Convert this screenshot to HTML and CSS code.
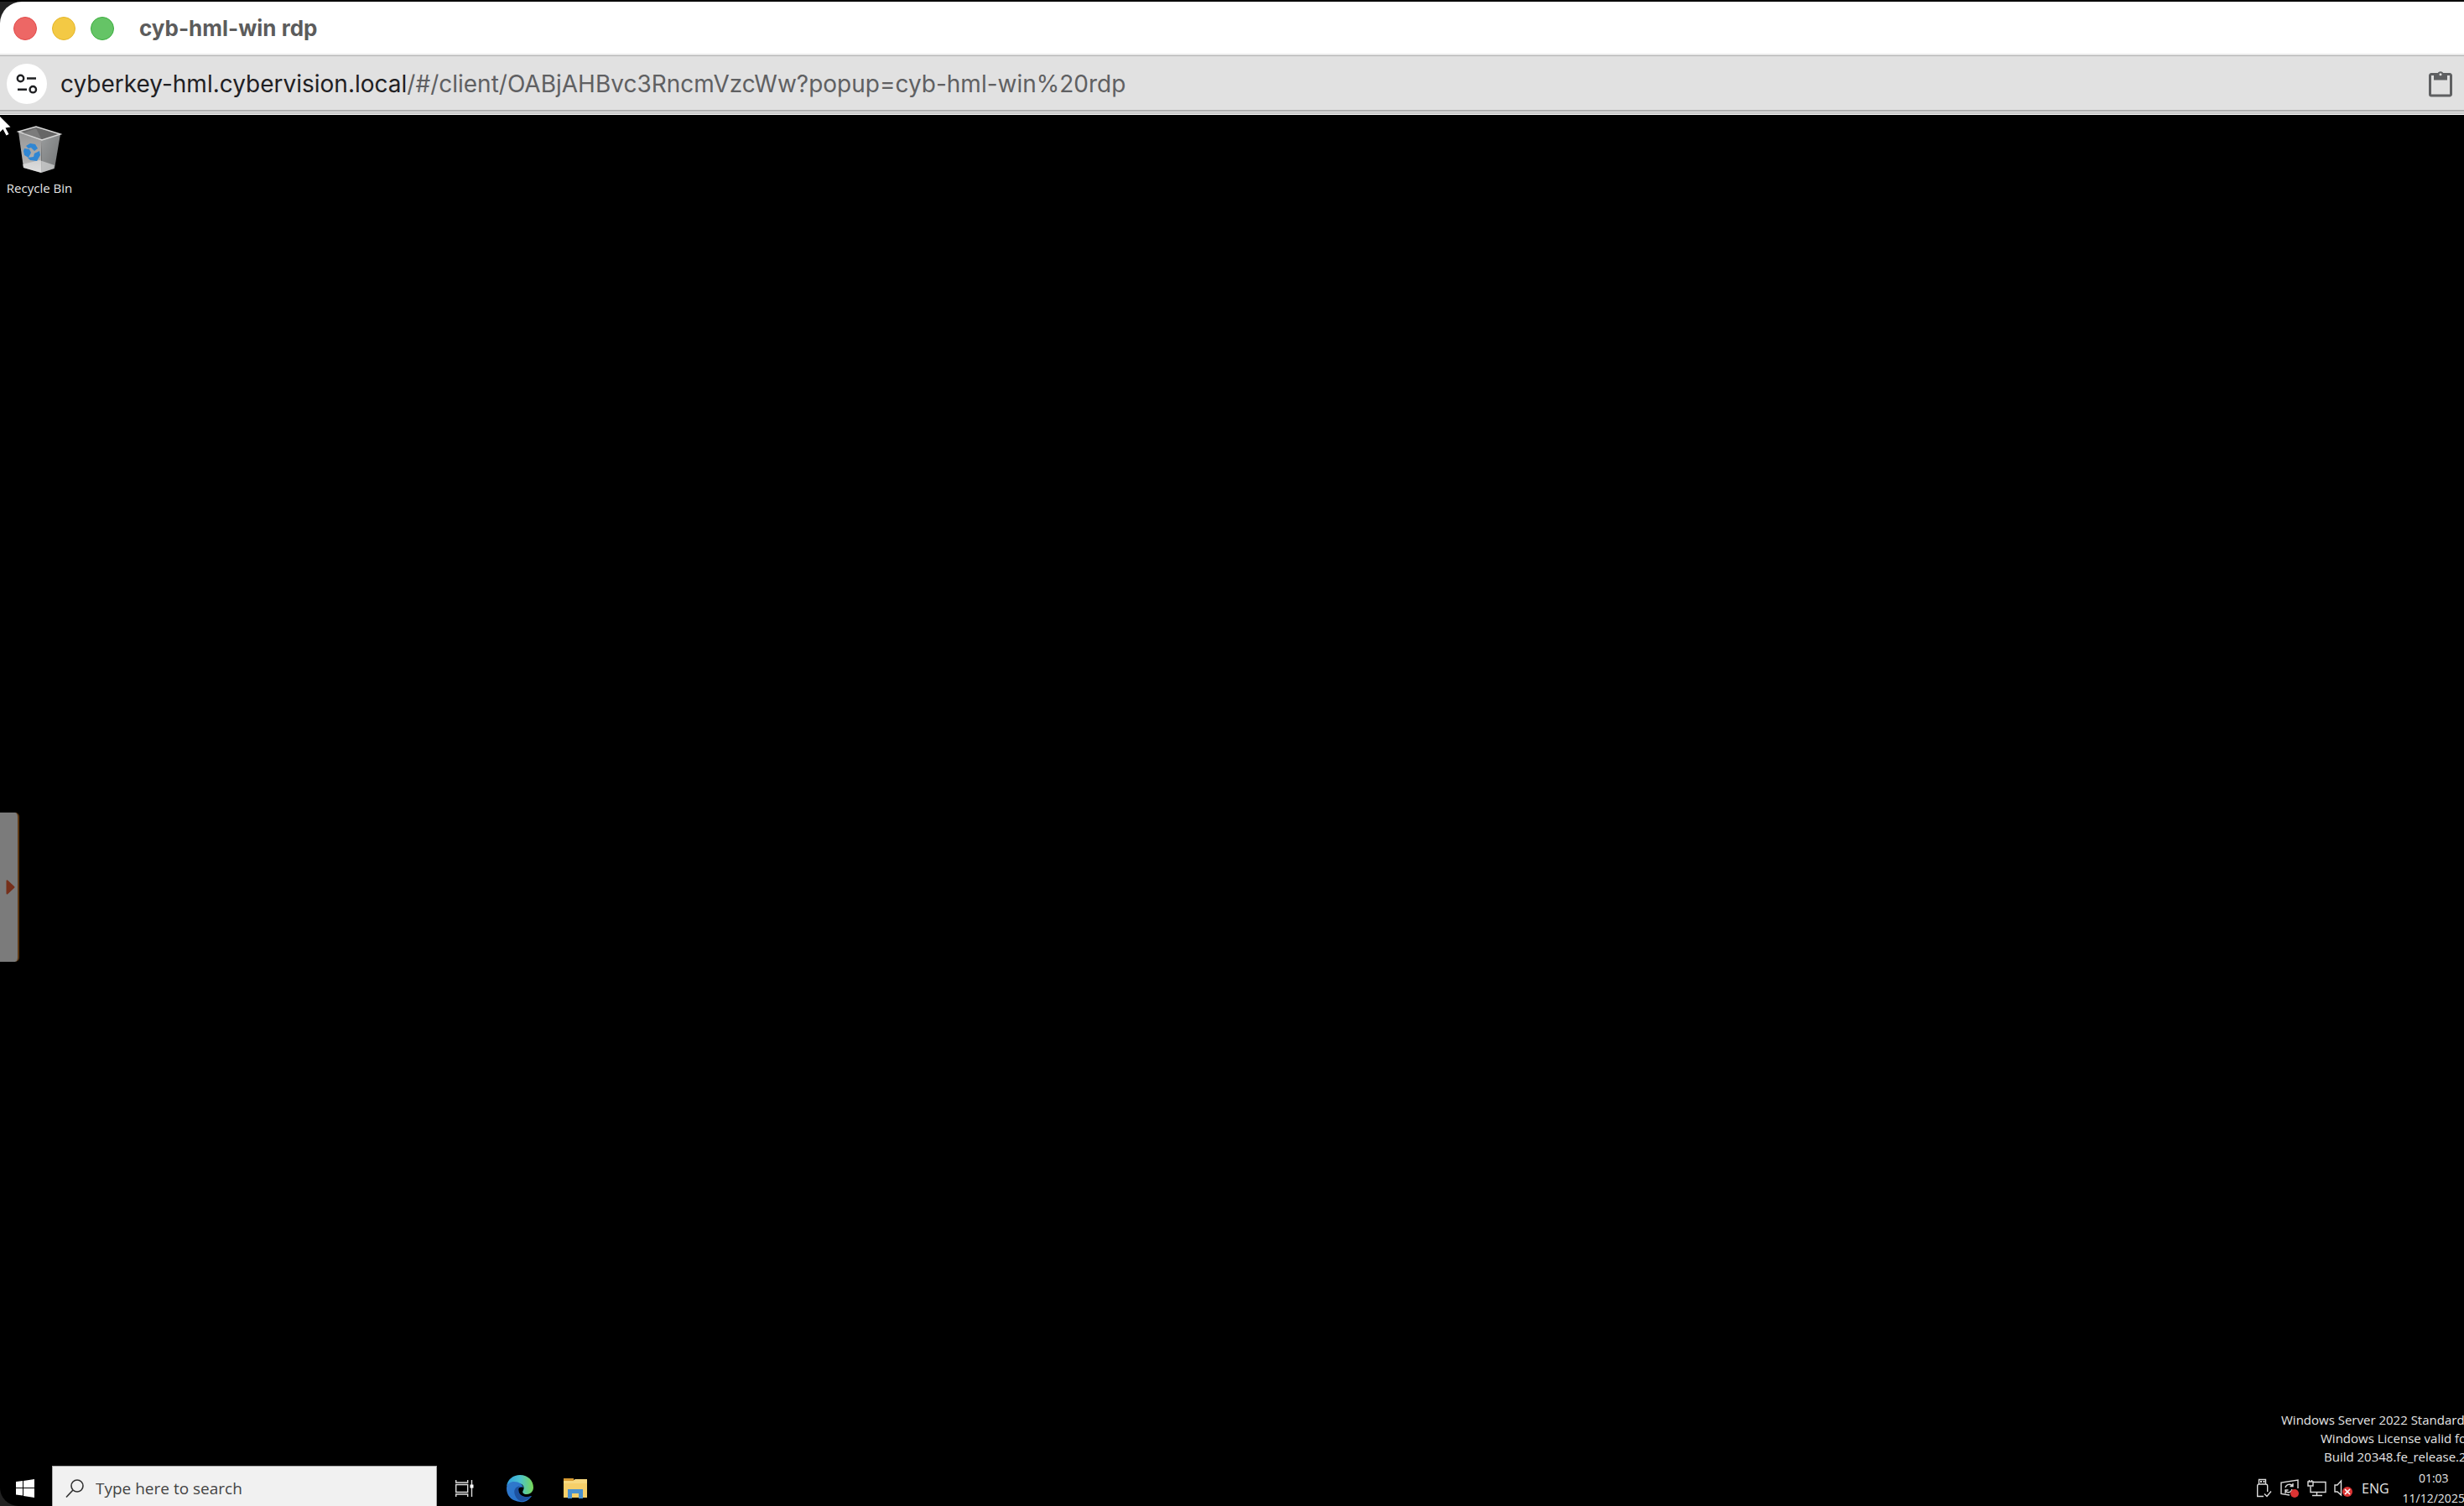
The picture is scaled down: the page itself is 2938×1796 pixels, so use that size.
FILE: index.html
```html
<!DOCTYPE html>
<html lang="en">
<head>
<meta charset="utf-8">
<title>cyb-hml-win rdp</title>
<link rel="stylesheet" href="styles.css">
</head>
<body>
<div class="window">
  <header class="titlebar">
    <div class="lights">
      <button class="light light-close" aria-label="Close"></button>
      <button class="light light-minimise" aria-label="Minimise"></button>
      <button class="light light-zoom" aria-label="Zoom"></button>
    </div>
    <h1 class="title">cyb-hml-win rdp</h1>
  </header>

  <div class="toolbar">
    <button class="site-info" aria-label="View site information">
      <svg width="48" height="48" viewBox="0 0 48 48" fill="none" stroke="#1f2023" stroke-width="2.4">
        <circle cx="16.5" cy="17.500" r="3.700"/><path d="M24 17.500h11M13 30.700h11"/><circle cx="31.300" cy="30.700" r="3.700"/>
      </svg>
    </button>
    <p class="address">cyberkey-hml.cybervision.local<span class="path">/#/client/OABjAHBvc3RncmVzcWw?popup=cyb-hml-win%20rdp</span></p>
    <button class="clipboard" aria-label="Clipboard">
      <svg width="28" height="32" viewBox="0 0 28 32">
        <path d="M3 4.500h22a1.500 1.500 0 0 1 1.500 1.500v22.500a1.500 1.500 0 0 1-1.500 1.500H3a1.500 1.500 0 0 1-1.500-1.500V6A1.500 1.500 0 0 1 3 4.500z" fill="none" stroke="#5f6062" stroke-width="3"/>
        <path d="M6 4h4.500a3.600 3.600 0 0 1 7 0H22v7.500H6z" fill="#5f6062"/><circle cx="14" cy="4.800" r="1.500" fill="#e1e1e1"/>
      </svg>
    </button>
  </div>
  <div class="divider"></div>

  <main class="desktop">
    <svg class="cursor" width="14" height="26" viewBox="0 0 14 26"><path d="M0 2l12.500 12.500-6 1 4 7.500-3 1.500L3.500 17 0 20.500z" fill="#fff"/></svg>

    <div class="workspace">
      <button class="shortcut">
        <svg width="52" height="58" viewBox="0 0 52 58">
          <defs>
            <linearGradient id="binLeft" x2="0" y2="1"><stop stop-color="#969696"/><stop offset=".7" stop-color="#b0b0b0"/><stop offset="1" stop-color="#d0d0d0"/></linearGradient>
            <linearGradient id="binRight" x2="1" y2="1"><stop stop-color="#9a9c9d"/><stop offset="1" stop-color="#707374"/></linearGradient>
          </defs>
          <path d="M1 7L29 17l-1 39L7 50z" fill="url(#binLeft)"/>
          <path d="M29 17l22-7-7 41-16 5z" fill="url(#binRight)"/>
          <path d="M6 46l20-5 18 6-1 4-15 5L7 50z" fill="#ececec" opacity=".55"/>
          <path d="M1 7L22 1l29 9-22 7z" fill="#666" stroke="#d8d8d8" stroke-width="1.500"/>
          <path d="M6 9l16-6 6 12z" fill="#898989" opacity=".6"/>
          <g fill="#2f86d3">
            <path d="M10 24l5-3 6 1 3 5-4 3-4-4-3 1z"/><path d="M8 27l6 1 2 4-3 6-5-3-1-5z"/><path d="M12 38l7-1 1-4 6-3 1 5-4 7-8-1z"/>
          </g>
        </svg>
        <span>Recycle Bin</span>
      </button>

      <button class="drawer-handle" aria-label="Open menu">
        <svg width="12" height="18" viewBox="0 0 12 18"><path d="M1.500 1.500v15l8-7.500z" fill="#76301b" stroke="#76301b" stroke-width="2" stroke-linejoin="round"/></svg>
      </button>

      <div class="watermark">
        <p>Windows Server 2022 Standard</p>
        <p class="license">Windows License valid for</p>
        <p class="build">Build 20348.fe_release.21</p>
      </div>
    </div>

    <footer class="taskbar">
      <button class="start" aria-label="Start">
        <svg width="22" height="22" viewBox="0 0 22 22" fill="#fff"><path d="M0 3l8-1v8H0zM9 2l13-2v10H9zM0 11h8v8.500L0 18.500zM9 11h13v11L9 20z"/></svg>
      </button>
      <label class="search">
        <svg width="22" height="22" viewBox="0 0 22 22" fill="none" stroke="#333" stroke-width="1.600"><circle cx="14" cy="8" r="7"/><path d="M9 13L1 21.500"/></svg>
        <input type="text" placeholder="Type here to search" aria-label="Type here to search">
      </label>
      <button class="app" aria-label="Task view">
        <svg width="24" height="22" viewBox="0 0 24 22" fill="none" stroke="#dedede" stroke-width="1.400"><path d="M1.700 1v3h14V1M1.700 6.500h14v9h-14zM1.700 21v-3h14v3M20.500 1v20"/><path d="M18.500 6.500h4v4h-4z" fill="#fff" stroke="none"/></svg>
      </button>
      <button class="app" aria-label="Microsoft Edge">
        <svg width="32" height="34" viewBox="0 0 32 34">
          <defs>
            <linearGradient id="edgeTop"><stop stop-color="#2d9ee0"/><stop offset=".5" stop-color="#4bc2ce"/><stop offset="1" stop-color="#79d955"/></linearGradient>
            <linearGradient id="edgeBody" x2="1" y2="1"><stop stop-color="#3179ca"/><stop offset="1" stop-color="#2472d0"/></linearGradient>
          </defs>
          <path d="M0 15C1 6 8 1 16 1c10 0 16 7 16 15 0 5-4 8-8 8-4 0-6-2-4-5 2-4-1-8-6-8C8 9 2 11 0 15z" fill="url(#edgeTop)"/>
          <path d="M0 17c0-6 5-8 9-8 6 0 10 3 11 7-6-2-8 3-5 7 3 5 9 5 15 3-4 6-9 8-14 7C6 32 0 26 0 17z" fill="url(#edgeBody)"/>
          <path d="M16 14c-6 1-8 6-6 11 2 5 6 8 10 7 4-1 8-3 10-6-6 2-13 1-15-4-1-3-1-6 1-8z" fill="#1d52a0"/>
        </svg>
      </button>
      <button class="app" aria-label="File Explorer">
        <svg width="30" height="26" viewBox="0 0 30 26">
          <path d="M1 3h28v21H1z" fill="#f6cf69"/><path d="M1 3h12l2-1h14v5H1z" fill="#f8d980"/><path d="M1 1h12v3H1z" fill="#d69a32"/>
          <path d="M6 14h18v11h-5v-6h-8v6H6z" fill="#4a91d0"/>
        </svg>
      </button>
      <div class="tray">
        <svg class="usb" width="18" height="24" viewBox="0 0 18 24" fill="none" stroke="#ddd" stroke-width="1.400"><path d="M3.500 7V1.500h8V7M9 21.500H1.700V9a2 2 0 0 1 2-2h8a2 2 0 0 1 2 2v7M10 18.500l3 3 5-6"/><path d="M5 4h2M8.500 4h2" stroke-width="2"/></svg>
        <svg width="24" height="24" viewBox="0 0 24 24" fill="none" stroke="#ddd" stroke-width="1.400"><path d="M12 20L2 18.500V5l20-3v10"/><path d="M7 11c1-4 6-5 9-2m0-3v3.500h-3.500M15 13c-1 4-5 5-8 2m0 3v-4h3.500"/><circle cx="18" cy="18" r="5" fill="#dc3333" stroke="none"/></svg>
        <svg width="24" height="24" viewBox="0 0 24 24" fill="none" stroke="#ddd" stroke-width="1.400"><path d="M8 4.500h15v12H5V10M7 20.500h12M12.500 17v3.500M2 4h6v5H2zM3.500 2v2M6.500 2v2"/></svg>
        <svg width="24" height="24" viewBox="0 0 24 24" fill="none" stroke="#ddd" stroke-width="1.400"><path d="M9.500 3v17L5 16H2V8h3z"/><circle cx="17" cy="16" r="6" fill="#dc3333" stroke="none"/><path d="M14 13l6 6m0-6l-6 6" stroke="#fff" stroke-width="1.600"/></svg>
        <span class="language">ENG</span>
        <div class="clock"><time>01:03</time><time>11/12/2025</time></div>
      </div>
    </footer>
  </main>
</div>
</body>
</html>
```
FILE: styles.css
```css
* { box-sizing: border-box; }
body {
  margin: 0;
  background: #111;
  font-family: "Open Sans", "Noto Sans", sans-serif;
  overflow: hidden;
}
h1, p { margin: 0; font-weight: inherit; }
button { border: 0; padding: 0; background: none; font: inherit; color: inherit; }
svg { display: block; flex: none; overflow: visible; }

.window {
  display: flex;
  flex-direction: column;
  height: 100vh;
  border-top: 2px solid #000;
  background: #222;
}
.titlebar {
  display: flex;
  align-items: center;
  gap: 30px;
  height: 64px;
  padding: 2px 16px 0;
  border-bottom: 2px solid #e8e8e8;
  border-top-left-radius: 26px;
  background: #fff;
}
.lights { display: flex; gap: 18px; }
.light { width: 28px; height: 28px; border: 1px solid; border-radius: 50%; }
.light-close { background: #ed6765; border-color: #e24b4b; }
.light-minimise { background: #f3c944; border-color: #e5b62a; }
.light-zoom { background: #65c466; border-color: #3dae40; }
.title {
  font: 700 26px/32px Inter, sans-serif;
  color: #5c5c5c;
}

.toolbar {
  display: flex;
  align-items: center;
  gap: 16px;
  height: 67px;
  padding: 2px 14px 0 8px;
  border-top: 1px solid #b1b1b1;
  border-bottom: 2px solid #b1b1b1;
  background: #e1e1e1;
}
.site-info { width: 48px; height: 48px; border-radius: 50%; background: #fff; }
.address {
  flex: 1;
  font: 28px/36px Inter, sans-serif;
  white-space: nowrap;
  color: #1f2023;
}
.path { color: #5f6062; }
.divider {
  height: 4px;
  border-top: 1px solid #e1e1e1;
  border-bottom: 1px solid #fff;
  background: #c8c8c8;
}

.desktop {
  position: relative;
  display: flex;
  flex: 1;
  flex-direction: column;
  min-height: 0;
  overflow: hidden;
  border-bottom-left-radius: 22px;
  background: #000;
  color: #e6e6e6;
}
.cursor { position: absolute; top: 0; left: 0; }
.workspace {
  display: flex;
  flex: 1;
  flex-direction: column;
  align-items: flex-start;
  justify-content: space-between;
  padding-top: 13px;
}
.shortcut {
  display: flex;
  flex-direction: column;
  align-items: center;
  gap: 5px;
  width: 94px;
  font-size: 15px;
  line-height: 22px;
}
.drawer-handle {
  position: absolute;
  top: 832px;
  left: 0;
  display: flex;
  align-items: center;
  width: 23px;
  height: 178px;
  padding-left: 7px;
  border-right: 2px solid #5d3813;
  border-radius: 0 5px 5px 0;
  background: #7b7b7b;
}
.watermark {
  align-self: flex-end;
  width: 218px;
  font-size: 15px;
  line-height: 22px;
  white-space: nowrap;
}
.license { padding-left: 47px; }
.build { padding-left: 51px; }

.taskbar {
  display: flex;
  align-items: stretch;
  height: 48px;
}
.start {
  display: flex;
  align-items: center;
  width: 62px;
  padding: 5px 0 0 19px;
}
.search {
  display: flex;
  align-items: center;
  gap: 14px;
  width: 459px;
  padding: 5px 0 0 15px;
  border: 1px solid #aaa;
  border-bottom: 0;
  background: #f1f1f1;
}
.search input {
  flex: 1;
  min-width: 0;
  padding: 0;
  border: 0;
  background: none;
  font: 19px/28px "Open Sans", "Noto Sans", sans-serif;
}
.search input::placeholder { color: #444; opacity: 1; }
.app {
  display: flex;
  align-items: center;
  justify-content: center;
  width: 66px;
  padding-top: 5px;
}
.tray {
  display: flex;
  align-items: center;
  gap: 8px;
  width: 248px;
  margin-left: auto;
  padding-top: 5px;
  white-space: nowrap;
}
.usb { margin-right: 2px; }
.language { padding-left: 2px; font-size: 16px; line-height: 24px; }
.clock {
  display: flex;
  flex: none;
  flex-direction: column;
  align-items: center;
  padding-left: 8px;
  font-size: 14px;
  line-height: 24px;
}
```
